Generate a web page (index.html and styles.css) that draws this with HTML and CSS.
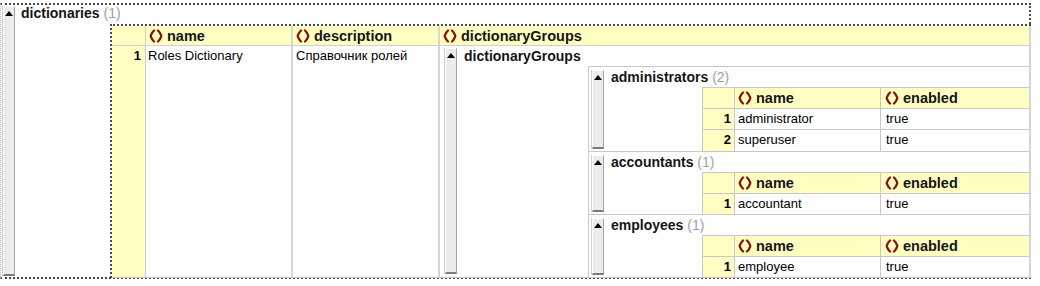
FILE: index.html
```html
<!DOCTYPE html>
<html>
<head>
<meta charset="utf-8">
<link rel="stylesheet" href="styles.css">
</head>
<body>
<svg class="defs" width="0" height="0" aria-hidden="true">
  <symbol id="br" viewBox="0 0 14 14">
    <path d="M5 1.5 C2.7 3.5 2.4 4.9 1.7 7 C2.4 9.1 2.7 10.5 5 12.5" fill="none" stroke="#8a1010" stroke-width="2.3" stroke-linecap="round" stroke-linejoin="round"/>
    <path d="M9 1.5 C11.3 3.5 11.6 4.9 12.3 7 C11.6 9.1 11.3 10.5 9 12.5" fill="none" stroke="#8a1010" stroke-width="2.3" stroke-linecap="round" stroke-linejoin="round"/>
  </symbol>
</svg>

<div class="root">
  <div class="bar"><i class="tri"></i></div>
  <div class="body">
    <div class="title">dictionaries <span class="count">(1)</span></div>
    <div class="outer">
      <div class="hd num"></div>
      <div class="hd"><svg class="ico"><use href="#br"/></svg>name</div>
      <div class="hd"><svg class="ico"><use href="#br"/></svg>description</div>
      <div class="hd"><svg class="ico"><use href="#br"/></svg>dictionaryGroups</div>
      <div class="cell num">1</div>
      <div class="cell">Roles Dictionary</div>
      <div class="cell">Справочник ролей</div>
      <div class="cell nest">
        <div class="dg">
          <div class="bar"><i class="tri"></i></div>
          <div class="body">
            <div class="title">dictionaryGroups</div>
            <div class="groups">

              <div class="group g-admin">
                <div class="bar"><i class="tri"></i></div>
                <div class="body">
                  <div class="title">administrators <span class="count">(2)</span></div>
                  <div class="inner rows2">
                    <div class="ih num"></div>
                    <div class="ih c2"><svg class="ico"><use href="#br"/></svg>name</div>
                    <div class="ih c3"><svg class="ico"><use href="#br"/></svg>enabled</div>
                    <div class="ic num">1</div>
                    <div class="ic c2">administrator</div>
                    <div class="ic c3">true</div>
                    <div class="ic num last">2</div>
                    <div class="ic c2 last">superuser</div>
                    <div class="ic c3 last">true</div>
                  </div>
                </div>
              </div>

              <div class="group g-acc">
                <div class="bar"><i class="tri"></i></div>
                <div class="body">
                  <div class="title">accountants <span class="count">(1)</span></div>
                  <div class="inner rows1">
                    <div class="ih num"></div>
                    <div class="ih c2"><svg class="ico"><use href="#br"/></svg>name</div>
                    <div class="ih c3"><svg class="ico"><use href="#br"/></svg>enabled</div>
                    <div class="ic num last">1</div>
                    <div class="ic c2 last">accountant</div>
                    <div class="ic c3 last">true</div>
                  </div>
                </div>
              </div>

              <div class="group g-emp">
                <div class="bar"><i class="tri"></i></div>
                <div class="body">
                  <div class="title">employees <span class="count">(1)</span></div>
                  <div class="inner rows1">
                    <div class="ih num"></div>
                    <div class="ih c2"><svg class="ico"><use href="#br"/></svg>name</div>
                    <div class="ih c3"><svg class="ico"><use href="#br"/></svg>enabled</div>
                    <div class="ic num last">1</div>
                    <div class="ic c2 last">employee</div>
                    <div class="ic c3 last">true</div>
                  </div>
                </div>
              </div>

            </div>
          </div>
        </div>
      </div>
    </div>
  </div>
</div>
</body>
</html>
```

FILE: styles.css
```css
* { box-sizing: border-box; }

body {
  margin: 0;
  background: #fff;
  color: #000;
  font-family: "Liberation Sans", Arial, sans-serif;
  font-size: 13px;
}

.defs { position: absolute; width: 0; height: 0; overflow: hidden; }

/* collapse bars */
.bar {
  flex: none;
  width: 12px;
  display: flex;
  justify-content: center;
  align-items: flex-start;
  padding-top: 4px;
  background: #ececec;
  border-top: 1px solid #fff;
  border-left: 1px solid #fff;
  border-right: 1px solid #a4a4a4;
  border-bottom: 2px solid #7c7c7c;
  box-shadow: -1px 0 0 #cdcdcd;
}
.tri {
  display: block;
  width: 0;
  height: 0;
  border-left: 4px solid transparent;
  border-right: 4px solid transparent;
  border-bottom: 5px solid #000;
}

.body {
  flex: 1;
  min-width: 0;
  display: flex;
  flex-direction: column;
}

.title {
  flex: none;
  height: 20px;
  line-height: 20px;
  font-size: 14px;
  font-weight: bold;
  color: #151515;
  white-space: nowrap;
}
.count { font-weight: normal; color: #a0a0a0; }

.ico {
  width: 14px;
  height: 14px;
  flex: none;
  margin-right: 4px;
}

/* root element */
.root {
  display: flex;
  margin-top: 3px;
  width: 1031px;
  height: 276px;
  border-top: 2px dotted #4a4a4a;
  border-right: 2px dotted #4a4a4a;
  border-bottom: 2px dotted #4a4a4a;
  border-left: 1px dotted #b8b8b8;
}
.root > .bar { margin: 1px 6px 1px 2px; }
.root > .body > .title { height: 19px; line-height: 17px; }

/* outer grid */
.outer {
  flex: none;
  margin-left: 89px;
  margin-right: -2px;
  height: 254px;
  display: grid;
  grid-template-columns: 34px 147px 147px 1fr;
  grid-template-rows: 20px 1fr;
  border-top: 2px dotted #4a4a4a;
  border-left: 2px dotted #4a4a4a;
}
.hd {
  display: flex;
  align-items: center;
  padding-left: 3px;
  background: #ffffc2;
  border-bottom: 1px solid #cfcfcf;
  border-right: 2px solid #d8d8d0;
  font-size: 14.5px;
  font-weight: bold;
  color: #151515;
  white-space: nowrap;
}
.cell {
  padding: 2px 3px 0 2px;
  line-height: 16px;
  border-right: 2px solid #d4d4d4;
  border-bottom: 1px solid #c4c4c4;
  white-space: nowrap;
}
.cell:nth-child(7) { padding-left: 3px; }
.outer .num {
  background: #ffffc2;
  border-right: 1px solid #cfcfcf;
  text-align: right;
  padding-right: 4px;
  font-weight: bold;
}

.nest {
  padding: 0;
  display: flex;
}
.dg { flex: 1; display: flex; }
.dg > .bar { margin: 2px 7px 3px 5px; }

.groups {
  flex: 1;
  margin-left: 124px;
  display: flex;
  flex-direction: column;
  border-top: 1px solid #c8c8c8;
  border-left: 1px solid #c8c8c8;
}

.group {
  display: flex;
  border-bottom: 1px solid #c8c8c8;
}
.g-admin { height: 85px; }
.g-acc { height: 63px; }
.g-emp { flex: 1; border-bottom: none; }
.group > .bar { margin: 3px 7px 2px 3px; }

/* inner grids */
.inner {
  flex: 1;
  margin-left: 91px;
  display: grid;
  grid-template-columns: 32px 146px 1fr;
  border-top: 1px solid #c8c8c8;
  border-left: 1px solid #c8c8c8;
}
.rows2 { grid-template-rows: 21px 21px 1fr; }
.rows1 { grid-template-rows: 21px 1fr; }

.ih {
  display: flex;
  align-items: center;
  padding-left: 3px;
  background: #ffffc2;
  border-bottom: 1px solid #c8c8c8;
  font-size: 14.5px;
  font-weight: bold;
  color: #151515;
  white-space: nowrap;
}
.ic {
  line-height: 20px;
  padding-left: 3px;
  border-bottom: 1px solid #c8c8c8;
  white-space: nowrap;
}
.ic.last { border-bottom: none; }
.inner .num {
  background: #ffffc2;
  border-right: 1px solid #c8c8c8;
  text-align: right;
  padding-right: 3px;
  font-weight: bold;
}
.inner .c2 { border-right: 1px solid #c8c8c8; }
.ih.c3 { padding-left: 4px; }
.ic.c3 { padding-left: 5px; }
```
